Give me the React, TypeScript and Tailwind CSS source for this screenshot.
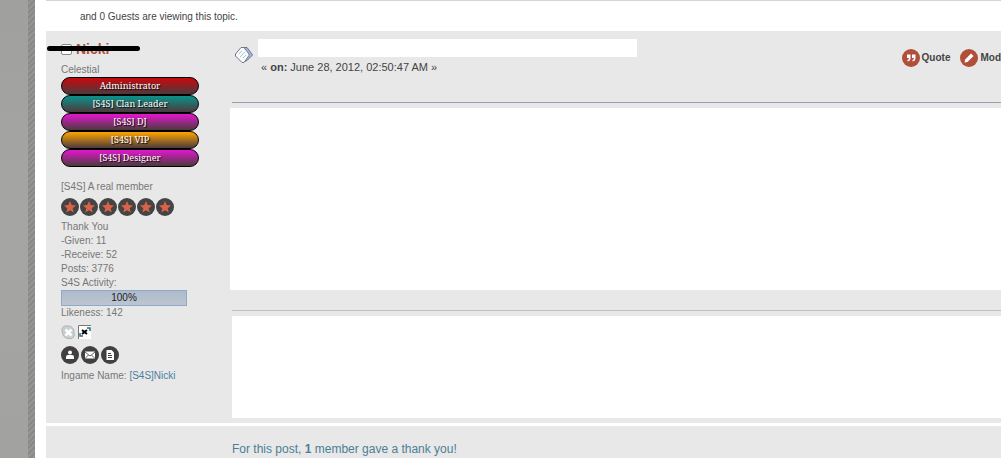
import type { ReactNode } from 'react';

const badges = [
  { label: 'Administrator', color: 'from-[#c8080e]' },
  { label: '[S4S] Clan Leader', color: 'from-[#0a928c]' },
  { label: '[S4S] DJ', color: 'from-[#e416d0]' },
  { label: '[S4S] VIP', color: 'from-[#ffa400]' },
  { label: '[S4S] Designer', color: 'from-[#e416d0]' },
];

const stats = ['Thank You', '-Given: 11', '-Receive: 52', 'Posts: 3776', 'S4S Activity:'];

function Star() {
  return (
    <svg viewBox="0 0 18 18" className="size-[18px]" aria-hidden="true">
      <circle cx="9" cy="9" r="9" fill="#444" />
      <path d="M9 3l1.7 4 4.3.4-3.3 2.8 1 4.3L9 12.2l-3.7 2.3 1-4.3L3 7.4 7.3 7z" fill="#d9624a" />
    </svg>
  );
}

function RoundLink({ label, children }: { label: string; children: ReactNode }) {
  return (
    <a href="#" aria-label={label}>
      <svg viewBox="0 0 18 18" className="size-[18px]">
        <circle cx="9" cy="9" r="9" fill="#404040" />
        {children}
      </svg>
    </a>
  );
}

function Sidebar() {
  return (
    <aside className="w-[164px] shrink-0 pt-2 pl-[15px] text-[10px] leading-[14px] text-[#777]">
      <div className="relative mb-1 flex h-5 items-center gap-1">
        <input type="checkbox" aria-label="Select Nicki" className="h-[11px] w-[11px] appearance-none rounded-xs border border-[#888] bg-white" />
        <a href="#" className="text-[14px] leading-5 font-bold text-[#b0503f]">Nicki</a>
        <span className="absolute top-[7px] -left-[14px] h-[5px] w-[93px] rounded-full bg-black" />
      </div>
      <p>Celestial</p>
      <ul className="w-[138px] font-['Noto_Serif','DejaVu_Serif',serif] text-[9px] text-white">
        {badges.map((b) => (
          <li
            key={b.label}
            className={`h-[18px] rounded-full border border-black bg-linear-to-b/srgb ${b.color} to-[#4c3a3c] text-center leading-4 [text-shadow:1px_1px_1px_#000]`}
          >
            {b.label}
          </li>
        ))}
      </ul>
      <p className="mt-[13px]">[S4S] A real member</p>
      <div className="my-1 flex gap-px">
        {[1, 2, 3, 4, 5, 6].map((n) => (
          <Star key={n} />
        ))}
      </div>
      {stats.map((s) => (
        <p key={s}>{s}</p>
      ))}
      <div className="h-4 w-[126px] border border-[#8faac4] bg-linear-to-b from-[#aebacb] to-[#bcc6d2] text-center text-[#222]">100%</div>
      <p>Likeness: 142</p>
      <div className="mt-[5px] flex h-4 gap-0.5">
        <svg viewBox="0 0 15 15" className="size-[15px]" aria-hidden="true">
          <path d="M1 4a4 4 0 0 1 5-3 6 6 0 0 1 7 7 4 4 0 0 1-5 5.500A6 6 0 0 1 1.500 7 4 4 0 0 1 1 4z" fill="#c9cfcf" stroke="#aeb4b4" />
          <path d="M4.500 4.500l6 6M10.500 4.500l-6 6" stroke="#fff" strokeWidth="2.500" />
        </svg>
        <svg viewBox="0 0 13 14" className="h-3.5 w-[13px]" aria-hidden="true">
          <path d="M0 0h13v14H0z" fill="#fff" />
          <path d="M.5 14V.5H13" fill="none" stroke="#777" />
          <path d="M2 8v3h3M9 3h3v3" fill="none" stroke="#2e6f88" strokeWidth="1.500" />
          <path d="M4 5l5 4M9 5L4 9" stroke="#000" strokeWidth="2" />
        </svg>
      </div>
      <div className="mt-[5px] mb-[5px] flex gap-0.5">
        <RoundLink label="Profile">
          <circle cx="9" cy="6.500" r="2" fill="#fff" />
          <path d="M5 13v-2q0-2 2-2h4q2 0 2 2v2z" fill="#fff" />
        </RoundLink>
        <RoundLink label="Email">
          <path d="M4 5.500h10v7H4z" fill="#fff" />
          <path d="M4 6l5 4 5-4M4 12.500l3.500-3.500M14 12.500L10.500 9" fill="none" stroke="#404040" strokeWidth=".8" />
        </RoundLink>
        <RoundLink label="Personal message">
          <path d="M5.500 4h5L13 6.500V14H5.500z" fill="#fff" />
          <path d="M7 7.500h3M7 9.500h4M7 11.500h4" stroke="#404040" />
        </RoundLink>
      </div>
      <p>
        Ingame Name: <a href="#" className="text-[#4b7f9f]">[S4S]Nicki</a>
      </p>
    </aside>
  );
}

function PostHeader() {
  return (
    <header className="ml-0.5 flex h-[72px] items-start border-b border-[#9c9bb4] pt-2">
      <svg viewBox="0 0 18 16" className="mt-2 ml-[3px] h-4 w-[18px] shrink-0" aria-hidden="true">
        <path d="M9 .5h3L17.500 8 12 13.500 8 15z" fill="#a9b8e8" stroke="#66708f" />
        <path d="M6 .5h3L14 7v1.500l-5 7H7L.5 9V7z" fill="#f6fafc" stroke="#727880" />
        <path d="M4 7l3-3M5 10l5-5M8 11l3-3" stroke="#b5c3d0" />
      </svg>
      <div className="ml-[5px] w-[379px]">
        <div className="h-[18px] bg-white" />
        <p className="ml-[3px] pt-[3px] text-[11px] leading-[14px] text-[#444]">
          « <b>on:</b> June 28, 2012, 02:50:47 AM »
        </p>
      </div>
      <ul className="mt-2.5 ml-auto flex shrink-0 gap-2.5 text-[10px] leading-[18px] font-bold text-[#444]">
        <li>
          <a href="#" className="flex gap-0.5">
            <svg viewBox="0 0 18 18" className="size-[18px]" aria-hidden="true">
              <circle cx="9" cy="9" r="9" fill="#b0503a" />
              <path d="M5 5.500h3.500V9q0 3-3 3.500V11q1.500-.5 1.500-2H5zM10 5.500h3.500V9q0 3-3 3.500V11q1.500-.5 1.500-2h-2z" fill="#fff" />
            </svg>
            Quote
          </a>
        </li>
        <li>
          <a href="#" className="flex gap-0.5">
            <svg viewBox="0 0 18 18" className="size-[18px]" aria-hidden="true">
              <circle cx="9" cy="9" r="9" fill="#b0503a" />
              <path d="M4.500 13.500l.7-3L11 4.500l2.500 2.500L7.500 13z" fill="#fff" />
            </svg>
            Mod
          </a>
        </li>
      </ul>
    </header>
  );
}

export default function App() {
  return (
    <div className="flex min-h-screen bg-[#a2a2a1] font-['Liberation_Sans',Arial,sans-serif]">
      <div className="w-7 shrink-0 bg-linear-to-b from-[#a0a09f] via-[#a5a5a4] to-[#a2a2a1]" />
      <div className="w-[7px] shrink-0 bg-[repeating-linear-gradient(135deg,#898989_0px,#898989_2px,#959595_2px,#959595_4px)]" />
      <main className="flex min-w-0 grow flex-col bg-white pl-[11px]">
        <div className="h-px bg-[#d4d4d4]" />
        <p className="h-[30px] pt-2 pl-[34px] text-[10px] leading-[15px] text-[#444]">and 0 Guests are viewing this topic.</p>
        <section className="flex bg-[#e8e8e8]">
          <Sidebar />
          <div className="ml-5 min-w-0 grow pb-[5px]">
            <PostHeader />
            <div className="mt-[5px] h-[182px] bg-white" />
            <div className="mt-5 ml-0.5 border-t border-[#c0c0c0] pt-[5px]">
              <div className="h-[102px] bg-white" />
            </div>
          </div>
        </section>
        <footer className="mt-[3px] grow bg-[#e8e8e8] pt-[14px] pl-[186px] text-[12px] leading-[18px] text-[#4b7f96]">
          For this post, <b>1</b> member gave a thank you!
        </footer>
      </main>
    </div>
  );
}
